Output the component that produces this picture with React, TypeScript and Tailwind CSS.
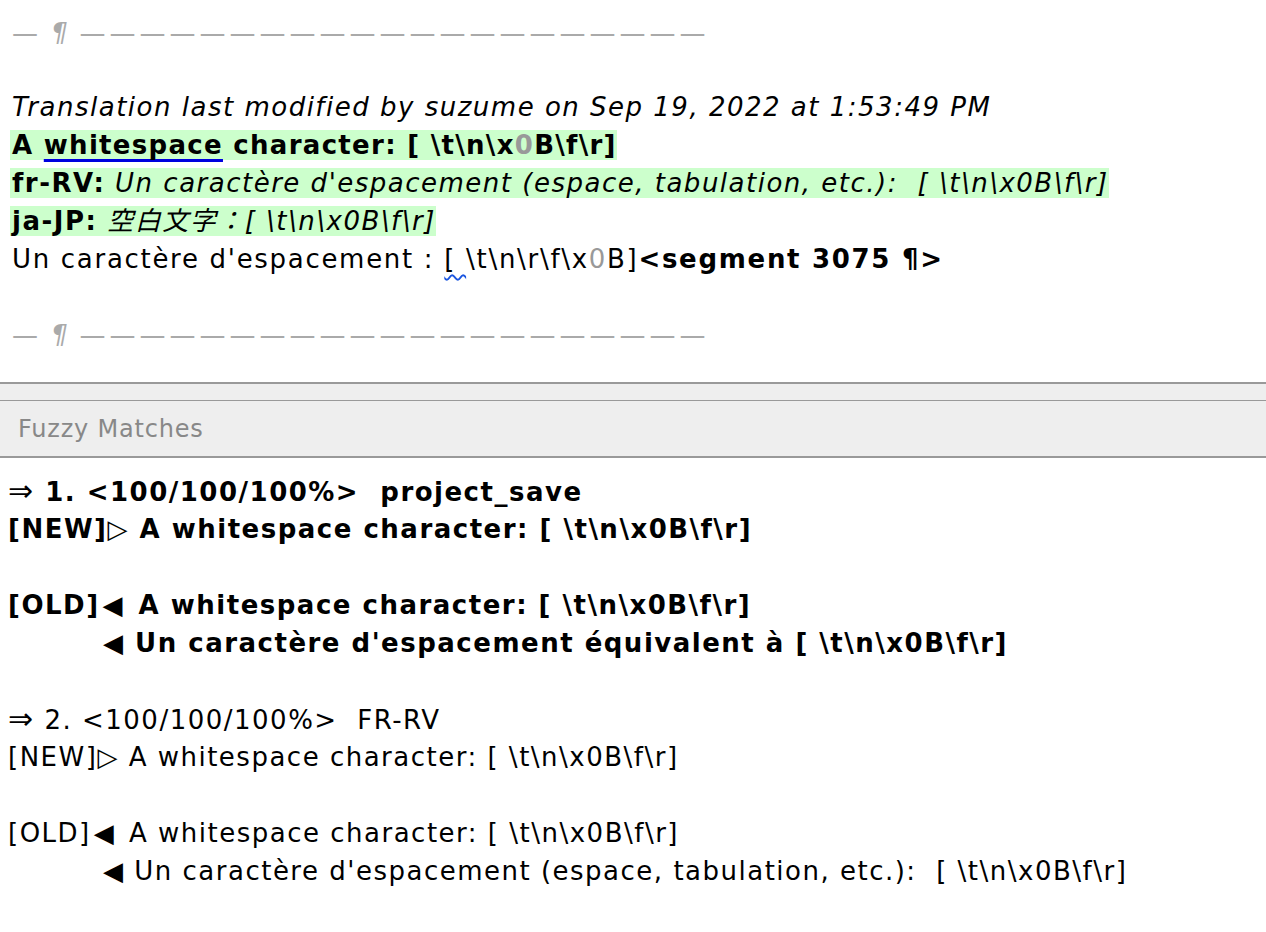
import React from "react";

const font = "font-['DejaVu_Sans','Noto_Sans_CJK_JP',sans-serif]";
const DASHES = "—————————————————————";

function Divider() {
  return (
    <div className="h-[38px] leading-[38px] whitespace-pre text-[#aaaaaa] text-[26px]">
      <span className="tracking-[4px]">—</span>
      <span className="italic"> ¶ </span>
      <span className="tracking-[4px]">{DASHES}</span>
    </div>
  );
}

function Match({ n, origin, bold, newText, oldText, oldTrans }: { n: number; origin: string; bold: boolean; newText: string; oldText: string; oldTrans: string }) {
  const w = bold ? "font-bold" : "";
  return (
    <div className="text-black">
      <div className="h-[38px] leading-[38px] whitespace-pre">
        <span className="text-[30px]">⇒</span>
        <span className={w}> {n}. &lt;100/100/100%&gt;  {origin}</span>
      </div>
      <div className={`h-[38px] leading-[38px] whitespace-pre ${w}`}>
        [NEW]<span className="font-normal">▷</span> {newText}
      </div>
      <div className="h-[38px]" />
      <div className={`h-[38px] leading-[38px] whitespace-pre ${w}`}>
        [OLD]<span className="pl-[3px] pr-[4px]">◀</span> {oldText}
      </div>
      <div className={`h-[38px] leading-[38px] whitespace-pre pl-[95px] ${w}`}>◀ {oldTrans}</div>
    </div>
  );
}

export default function App() {
  return (
    <div className={`w-[1266px] h-[932px] overflow-hidden bg-white text-[26px] tracking-[1.5px] text-black ${font}`}>
      <div className="h-[382px] pl-3 pt-[14px]">
        <Divider />
        <div className="mt-[36px] -ml-[2px]">
          <div className="h-[38px] leading-[38px] italic whitespace-pre pl-[2px]">
            Translation last modified by suzume on Sep 19, 2022 at 1:53:49 PM
          </div>
          <div className="leading-[38px] whitespace-pre">
            <span className="bg-[#ccffcc] pl-[2px] font-bold tracking-[1.3px]">
              A <span className="underline decoration-[#0000e0] decoration-[3px] underline-offset-[5px]">whitespace</span> character: [ \t\n\x<span className="text-[#999999]">0</span>B\f\r]
            </span>
            <br />
            <span className="bg-[#ccffcc] pl-[2px]">
              <span className="font-bold">fr-RV:</span> <span className="italic">Un caractère d'espacement (espace, tabulation, etc.):  [ \t\n\x0B\f\r]</span>
            </span>
            <br />
            <span className="bg-[#ccffcc] pl-[2px]">
              <span className="font-bold">ja-JP:</span> <span className="italic">空白文字：[ \t\n\x0B\f\r]</span>
            </span>
            <br />
            <span className="pl-[2px] tracking-[1.7px]">
              Un caractère d'espacement : <span className="underline decoration-wavy decoration-[#1a55e0] decoration-[2px] underline-offset-[6px]">[ </span>\t\n\r\f\x<span className="text-[#999999]">0</span>B]<span className="font-bold">&lt;segment 3075 ¶&gt;</span>
            </span>
          </div>
        </div>
        <div className="mt-[38px]">
          <Divider />
        </div>
      </div>
      <div className="border-t-2 border-[#999999] bg-[#eeeeee] h-[18px]" />
      <div className="border-t border-[#999999] bg-[#eeeeee] h-[58px] flex items-center pl-[18px] text-[24px] tracking-[0.8px] text-[#888888] border-b-2">
        Fuzzy Matches
      </div>
      <div className="pl-2 pt-[14px]">
        <Match
          n={1}
          origin="project_save"
          bold
          newText="A whitespace character: [ \t\n\x0B\f\r]"
          oldText="A whitespace character: [ \t\n\x0B\f\r]"
          oldTrans="Un caractère d'espacement équivalent à [ \t\n\x0B\f\r]"
        />
        <div className="h-[38px]" />
        <Match
          n={2}
          origin="FR-RV"
          bold={false}
          newText="A whitespace character: [ \t\n\x0B\f\r]"
          oldText="A whitespace character: [ \t\n\x0B\f\r]"
          oldTrans="Un caractère d'espacement (espace, tabulation, etc.):  [ \t\n\x0B\f\r]"
        />
      </div>
    </div>
  );
}
